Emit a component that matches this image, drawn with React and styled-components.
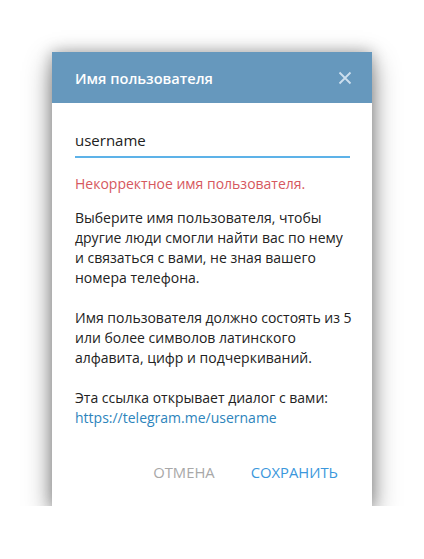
import React from "react";
import styled, { createGlobalStyle } from "styled-components";

const Global = createGlobalStyle`
  html, body { margin: 0; padding: 0; background: #fff; }
  body { font-family: "Open Sans", "Noto Sans", sans-serif; }
`;

const Page = styled.div`
  padding: 52px 0 0 52px;
`;

const Dialog = styled.div`
  width: 320px;
  height: 454px;
  background: #fff;
  box-shadow: 0 10px 26px rgba(0, 0, 0, 0.42), 0 0 14px rgba(0, 0, 0, 0.28);
  display: flex;
  flex-direction: column;
`;

const Header = styled.div`
  height: 51px;
  background: #6698bd;
  display: flex;
  align-items: center;
  justify-content: space-between;
  padding: 0 20px 0 23px;
  box-sizing: border-box;
`;

const Title = styled.div`
  color: #fff;
  font-weight: 600;
  font-size: 14.6px;
`;

const Close = styled.button`
  background: none;
  border: 0;
  padding: 0;
  width: 14px;
  height: 14px;
  display: flex;
  cursor: pointer;
`;

const Body = styled.div`
  flex: 1;
  padding: 27px 18px 0 23px;
  display: flex;
  flex-direction: column;
`;

const Field = styled.div`
  font-size: 15px;
  color: #222;
  line-height: 20px;
  padding-bottom: 6px;
  margin-right: 4px;
  border-bottom: 2px solid #5db2e8;
`;

const Error = styled.div`
  color: #d6585e;
  font-size: 14px;
  line-height: 20px;
  margin-top: 16px;
`;

const Text = styled.p`
  margin: ${(p) => p.$top || 20}px 0 0;
  font-size: 14px;
  line-height: 20px;
  color: #222;
`;

const Link = styled.a`
  color: #2d84bc;
  text-decoration: none;
`;

const Buttons = styled.div`
  margin-top: auto;
  display: flex;
  justify-content: flex-end;
  gap: 36px;
  padding: 0 16px 24px 0;
`;

const Btn = styled.button`
  background: none;
  border: 0;
  padding: 0;
  font-family: inherit;
  font-size: 14.8px;
  line-height: 20px;
  color: ${(p) => (p.$primary ? "#3b97dc" : "#a8a8a8")};
  cursor: pointer;
`;

export default function App() {
  return (
    <>
      <Global />
      <Page>
        <Dialog>
          <Header>
            <Title>Имя пользователя</Title>
            <Close aria-label="close">
              <svg width="14" height="14" viewBox="0 0 14 14">
                <path d="M1.5 1.5L12.5 12.5M12.5 1.5L1.5 12.5" stroke="#cddfee" strokeWidth="1.8" />
              </svg>
            </Close>
          </Header>
          <Body>
            <Field>username</Field>
            <Error>Некорректное имя пользователя.</Error>
            <Text $top={14}>
              Выберите имя пользователя, чтобы другие люди смогли найти вас по нему и связаться с вами, не зная вашего номера телефона.
            </Text>
            <Text>
              Имя пользователя должно состоять из 5 или более символов латинского алфавита, цифр и подчеркиваний.
            </Text>
            <Text>
              Эта ссылка открывает диалог с вами:
              <br />
              <Link href="#">https://telegram.me/username</Link>
            </Text>
            <Buttons>
              <Btn>ОТМЕНА</Btn>
              <Btn $primary>СОХРАНИТЬ</Btn>
            </Buttons>
          </Body>
        </Dialog>
      </Page>
    </>
  );
}
